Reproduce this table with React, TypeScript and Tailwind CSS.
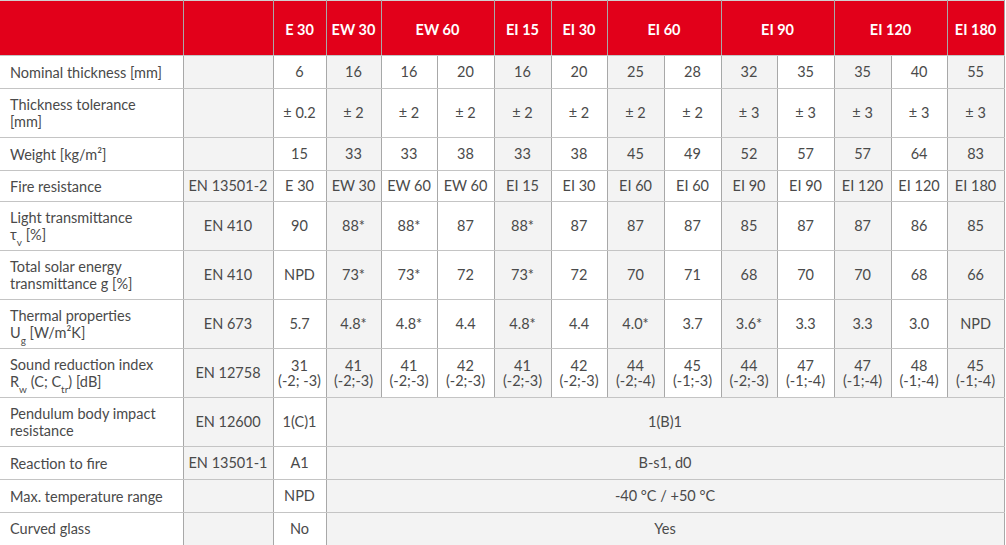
import React from "react";

const widths = [183, 90, 53, 55, 56, 57, 57, 56, 57, 57, 56, 57, 57, 56, 57];
// shading per data column (13 columns): true = gray
const shade = [false, true, false, false, true, false, true, false, true, false, true, false, true];

type Cell = React.ReactNode;
type Row = { label: Cell; std: Cell; vals?: Cell[]; first?: Cell; merged?: Cell; tall?: boolean };

const pm = (n: string) => <span>±&nbsp;{n}</span>;
const sr = (a: string, b: string) => (
  <span className="block leading-[15px]">
    {a}
    <br />
    {b}
  </span>
);

const rows: Row[] = [
  { label: "Nominal thickness [mm]", std: "", vals: ["6", "16", "16", "20", "16", "20", "25", "28", "32", "35", "35", "40", "55"] },
  {
    label: (
      <>
        Thickness tolerance
        <br />
        [mm]
      </>
    ),
    std: "",
    tall: true,
    vals: [pm("0.2"), pm("2"), pm("2"), pm("2"), pm("2"), pm("2"), pm("2"), pm("2"), pm("3"), pm("3"), pm("3"), pm("3"), pm("3")],
  },
  { label: "Weight [kg/m²]", std: "", vals: ["15", "33", "33", "38", "33", "38", "45", "49", "52", "57", "57", "64", "83"] },
  { label: "Fire resistance", std: "EN 13501-2", vals: ["E 30", "EW 30", "EW 60", "EW 60", "EI 15", "EI 30", "EI 60", "EI 60", "EI 90", "EI 90", "EI 120", "EI 120", "EI 180"] },
  {
    label: (
      <>
        Light transmittance
        <br />
        τ<sub className="text-[10px] align-[-3px]">v</sub> [%]
      </>
    ),
    std: "EN 410",
    tall: true,
    vals: ["90", "88*", "88*", "87", "88*", "87", "87", "87", "85", "87", "87", "86", "85"],
  },
  {
    label: (
      <>
        Total solar energy
        <br />
        transmittance g [%]
      </>
    ),
    std: "EN 410",
    tall: true,
    vals: ["NPD", "73*", "73*", "72", "73*", "72", "70", "71", "68", "70", "70", "68", "66"],
  },
  {
    label: (
      <>
        Thermal properties
        <br />
        U<sub className="text-[10px] align-[-3px]">g</sub> [W/m²K]
      </>
    ),
    std: "EN 673",
    tall: true,
    vals: ["5.7", "4.8*", "4.8*", "4.4", "4.8*", "4.4", "4.0*", "3.7", "3.6*", "3.3", "3.3", "3.0", "NPD"],
  },
  {
    label: (
      <>
        Sound reduction index
        <br />
        R<sub className="text-[10px] align-[-3px]">w</sub> (C; C<sub className="text-[10px] align-[-3px]">tr</sub>) [dB]
      </>
    ),
    std: "EN 12758",
    tall: true,
    vals: [
      sr("31", "(-2; -3)"),
      sr("41", "(-2;-3)"),
      sr("41", "(-2;-3)"),
      sr("42", "(-2;-3)"),
      sr("41", "(-2;-3)"),
      sr("42", "(-2;-3)"),
      sr("44", "(-2;-4)"),
      sr("45", "(-1;-3)"),
      sr("44", "(-2;-3)"),
      sr("47", "(-1;-4)"),
      sr("47", "(-1;-4)"),
      sr("48", "(-1;-4)"),
      sr("45", "(-1;-4)"),
    ],
  },
  {
    label: (
      <>
        Pendulum body impact
        <br />
        resistance
      </>
    ),
    std: "EN 12600",
    tall: true,
    first: "1(C)1",
    merged: "1(B)1",
  },
  { label: "Reaction to fire", std: "EN 13501-1", first: "A1", merged: "B-s1, d0" },
  { label: "Max. temperature range", std: "", first: "NPD", merged: "-40 °C / +50 °C" },
  { label: "Curved glass", std: "", first: "No", merged: "Yes" },
];

const headers: { t: string; span: number }[] = [
  { t: "E 30", span: 1 },
  { t: "EW 30", span: 1 },
  { t: "EW 60", span: 2 },
  { t: "EI 15", span: 1 },
  { t: "EI 30", span: 1 },
  { t: "EI 60", span: 2 },
  { t: "EI 90", span: 2 },
  { t: "EI 120", span: 2 },
  { t: "EI 180", span: 1 },
];

const td = "border-y border-y-[#c4c4c4] border-x border-x-[#a8a8a8] p-0";

export default function App() {
  return (
    <div className="w-[1006px] h-[545px] bg-white overflow-hidden" style={{ fontFamily: "Lato, 'Open Sans', sans-serif" }}>
      <table className="table-fixed border-collapse w-[1004px] text-[14.5px] text-[#4a4a4a]">
        <colgroup>
          {widths.map((w, i) => (
            <col key={i} style={{ width: w }} />
          ))}
        </colgroup>
        <thead>
          <tr className="h-[55px] bg-[#e2001a] text-white font-bold">
            <th className="border-t border-t-[#d0d0d0] border-r border-r-[#a8a8a8] border-b border-b-[#c4c4c4]"></th>
            <th className="border-t border-t-[#d0d0d0] border-x border-x-[#a8a8a8] border-b border-b-[#c4c4c4]"></th>
            {headers.map((h, i) => (
              <th
                key={i}
                colSpan={h.span}
                className="border-t border-t-[#d0d0d0] border-x border-x-[#a8a8a8] border-b border-b-[#c4c4c4] text-center pt-[3px] text-[14.5px] font-bold"
              >
                {h.t}
              </th>
            ))}
          </tr>
        </thead>
        <tbody>
          {rows.map((r, ri) => {
            const last = ri === rows.length - 1;
            const bb = last ? "border-b-2 border-b-[#9a9a9a]" : "";
            const h = r.tall ? "h-[49px]" : ri === 3 ? "h-[31px]" : "h-[33px]";
            return (
              <tr key={ri} className={h}>
                <td className={`${td} ${bb} border-l-0 pl-[10px] pr-1 text-left leading-[17px] bg-white`}>{r.label}</td>
                <td className={`${td} ${bb} text-center bg-[#f3f3f3]`}>{r.std}</td>
                {r.vals
                  ? r.vals.map((v, vi) => (
                      <td key={vi} className={`${td} ${bb} text-center ${shade[vi] ? "bg-[#f3f3f3]" : "bg-white"}`}>
                        {v}
                      </td>
                    ))
                  : [
                      <td key="f" className={`${td} ${bb} text-center bg-white`}>
                        {r.first}
                      </td>,
                      <td key="m" colSpan={12} className={`${td} ${bb} text-center bg-[#f3f3f3]`}>
                        {r.merged}
                      </td>,
                    ]}
              </tr>
            );
          })}
        </tbody>
      </table>
    </div>
  );
}
